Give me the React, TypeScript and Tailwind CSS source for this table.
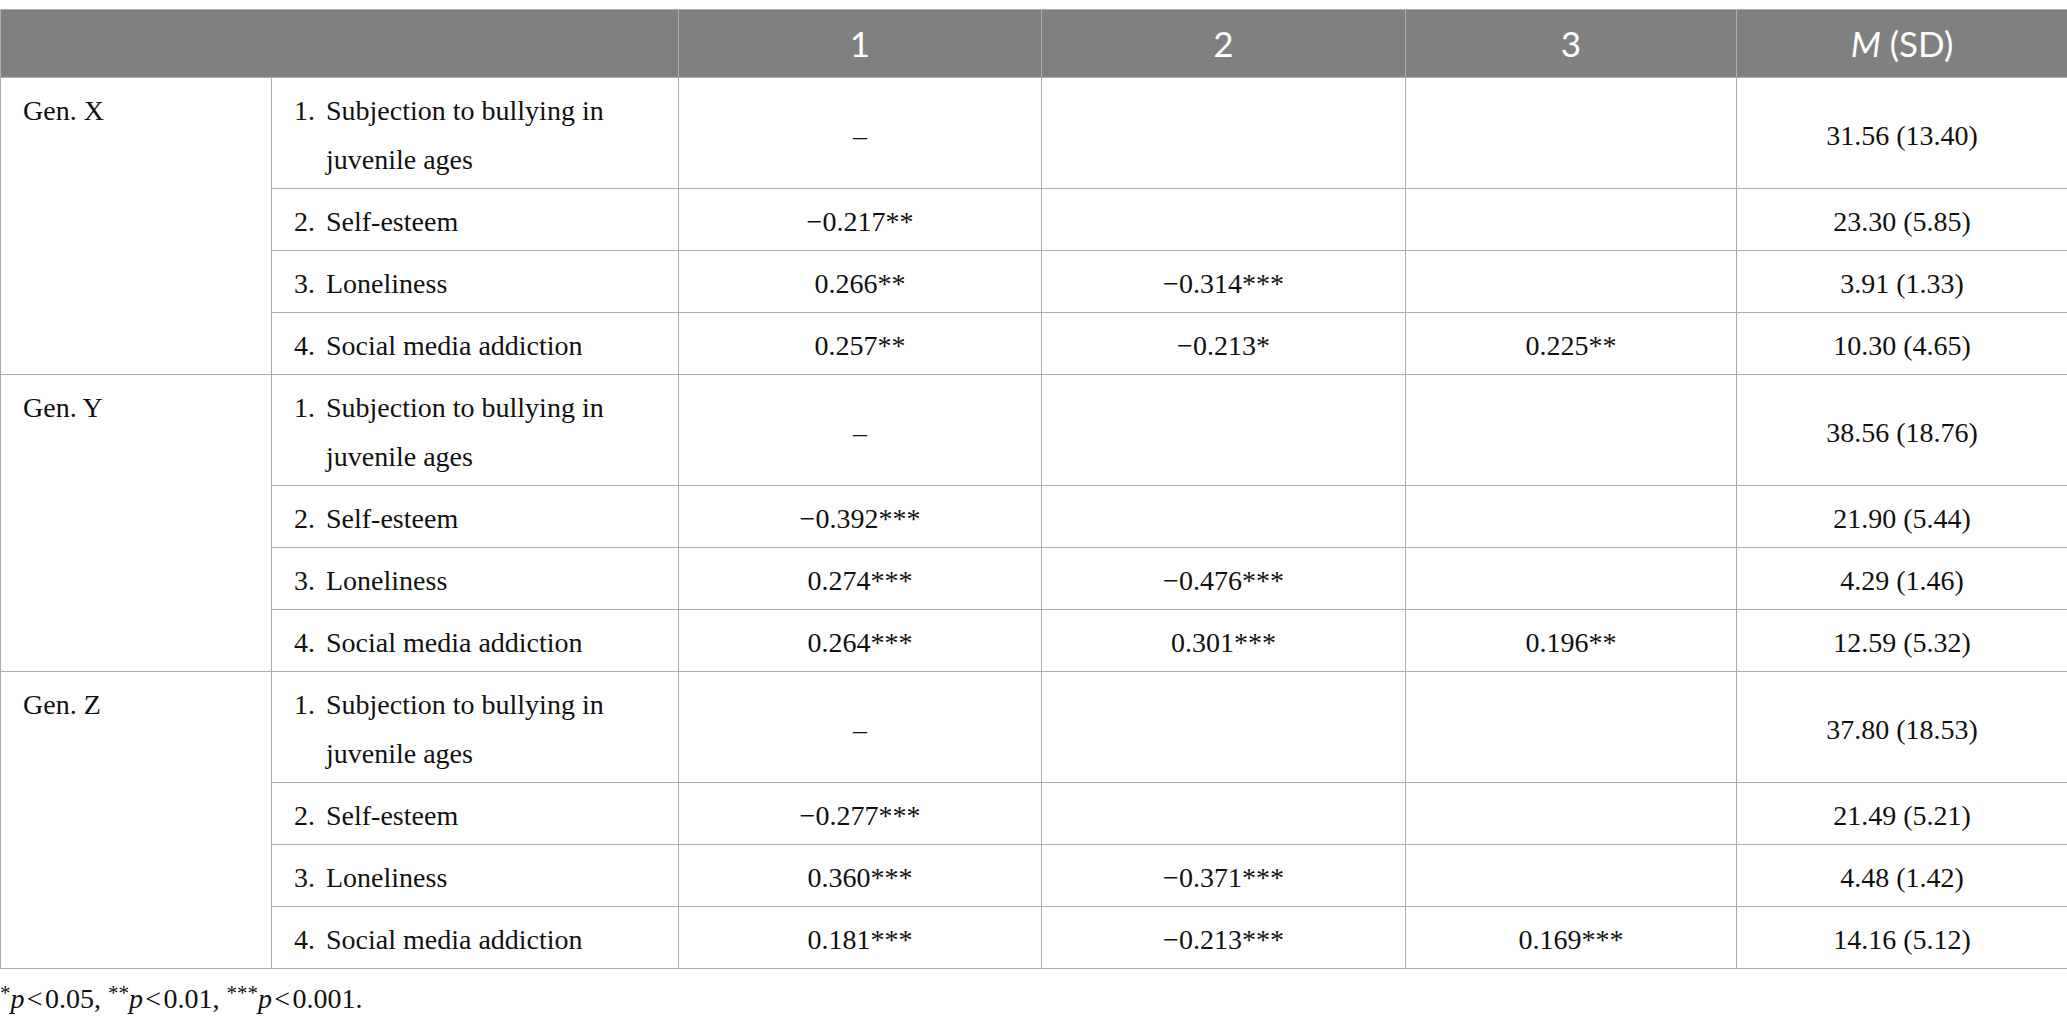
import React from 'react';

type Row = { label: string; cells: string[] };
type Group = { gen: string; rows: Row[] };

const LABELS = [
  'Subjection to bullying in juvenile ages',
  'Self-esteem',
  'Loneliness',
  'Social media addiction',
];

const GROUPS: Group[] = [
  {
    gen: 'Gen. X',
    rows: [
      { label: LABELS[0], cells: ['–', '', '', '31.56 (13.40)'] },
      { label: LABELS[1], cells: ['−0.217**', '', '', '23.30 (5.85)'] },
      { label: LABELS[2], cells: ['0.266**', '−0.314***', '', '3.91 (1.33)'] },
      { label: LABELS[3], cells: ['0.257**', '−0.213*', '0.225**', '10.30 (4.65)'] },
    ],
  },
  {
    gen: 'Gen. Y',
    rows: [
      { label: LABELS[0], cells: ['–', '', '', '38.56 (18.76)'] },
      { label: LABELS[1], cells: ['−0.392***', '', '', '21.90 (5.44)'] },
      { label: LABELS[2], cells: ['0.274***', '−0.476***', '', '4.29 (1.46)'] },
      { label: LABELS[3], cells: ['0.264***', '0.301***', '0.196**', '12.59 (5.32)'] },
    ],
  },
  {
    gen: 'Gen. Z',
    rows: [
      { label: LABELS[0], cells: ['–', '', '', '37.80 (18.53)'] },
      { label: LABELS[1], cells: ['−0.277***', '', '', '21.49 (5.21)'] },
      { label: LABELS[2], cells: ['0.360***', '−0.371***', '', '4.48 (1.42)'] },
      { label: LABELS[3], cells: ['0.181***', '−0.213***', '0.169***', '14.16 (5.12)'] },
    ],
  },
];

const serif = "font-['Liberation_Serif',serif]";
const sans = "font-['Lato','Open_Sans',sans-serif]";

export default function App() {
  return (
    <div className={`bg-white w-[2067px] pt-[9px] text-[#111111] ${serif}`}>
      <table className="w-[2067px] table-fixed border-collapse">
        <colgroup>
          <col className="w-[271px]" />
          <col className="w-[407px]" />
          <col className="w-[363px]" />
          <col className="w-[364px]" />
          <col className="w-[331px]" />
          <col className="w-[331px]" />
        </colgroup>
        <thead>
          <tr className={`h-[68px] bg-[#808080] text-white text-[35px] ${sans}`}>
            <th colSpan={2} className="border border-[#adadad]" />
            <th className="border border-[#adadad] font-normal">1</th>
            <th className="border border-[#adadad] font-normal">2</th>
            <th className="border border-[#adadad] font-normal">3</th>
            <th className="border border-[#adadad] font-normal">
              <i>M</i> (SD)
            </th>
          </tr>
        </thead>
        <tbody className="text-[28px] leading-[49px]">
          {GROUPS.map(group =>
            group.rows.map((row, i) => (
              <tr key={group.gen + i}>
                {i === 0 && (
                  <td rowSpan={4} className="border border-[#adadad] align-top pl-[22px] pt-[8px]">
                    {group.gen}
                  </td>
                )}
                <td className="border border-[#adadad] pl-[22px] pr-[20px] pt-[8px] pb-[4px]">
                  <div className="flex">
                    <span className="w-[32px] shrink-0">{i + 1}.</span>
                    <span className="flex-1">{row.label}</span>
                  </div>
                </td>
                {row.cells.map((c, j) => (
                  <td key={j} className="border border-[#adadad] text-center pt-[8px] pb-[4px]">
                    {c}
                  </td>
                ))}
              </tr>
            ))
          )}
        </tbody>
      </table>
      <p className="text-[28px] leading-[40px] mt-[10px]">
        <sup className="text-[21px] top-[-0.4em]">*</sup>
        <i>p</i>
        {'\u200a<\u200a0.05, '}
        <sup className="text-[21px] top-[-0.4em]">**</sup>
        <i>p</i>
        {'\u200a<\u200a0.01, '}
        <sup className="text-[21px] top-[-0.4em]">***</sup>
        <i>p</i>
        {'\u200a<\u200a0.001.'}
      </p>
    </div>
  );
}
